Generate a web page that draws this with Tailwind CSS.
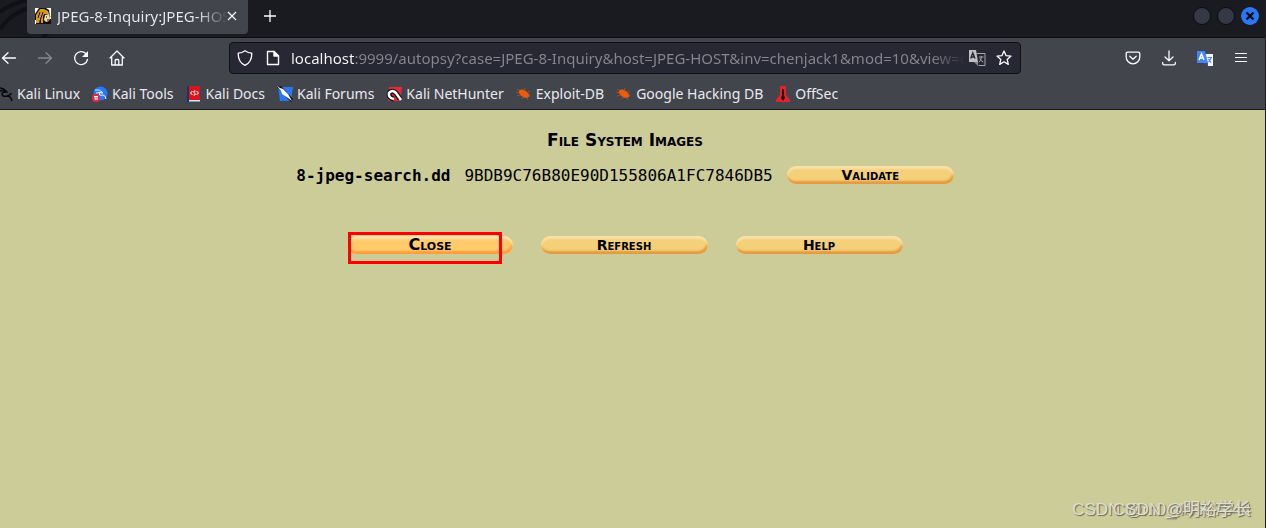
<!DOCTYPE html>
<html lang="en">
<head>
    <meta charset="UTF-8">
    <meta name="viewport" content="width=device-width, initial-scale=1.0">
    <title>JPEG-8-Inquiry:JPEG-HOST</title>
    <script src="https://cdn.jsdelivr.net/npm/@tailwindcss/browser@4"></script>
</head>
<body class="relative flex flex-col min-h-screen overflow-hidden bg-[#cccc99] border-r border-[#1b1c22] font-['Noto_Sans',sans-serif] text-[15px] text-[#e9e9ed]">

    <!-- Tab bar -->
    <header class="relative flex items-start h-[38px] pl-[27px] pr-[6px] bg-[#1a1b20] border-b border-[#0c0c0d]">
        <svg class="absolute left-0 top-0 w-[60px] h-[37px]" viewBox="0 0 60 37" fill="none" stroke="#101116" stroke-width="4"><path d="M0 12Q12 3 28 0M0 29Q12 12 32 7M43 37Q50 30 60 27"/></svg>
        <div class="relative flex items-center w-[221px] h-[34px] px-2 pb-[2px] bg-[#42454c] rounded-b">
            <svg class="w-4 h-4 shrink-0" viewBox="0 0 16 16">
                <path fill="#fff" d="M0 0h16v16H0z"/>
                <path fill="#111" d="M4 0h7l3 2 1 6 1 1v7H0V6z"/>
                <path fill="#fff" d="M15 8l1 1v2h-1zM0 12h1v4H0z"/>
                <path fill="#d99a16" d="M5 1h4l4 2 1 3H9L8 9v6H6V9l-2 6H1V7z"/>
                <path fill="#f2d9a7" d="M10 7l4-1 1 4-1 3-3 1-2-2z"/>
                <path stroke="#111" d="M5 4L3 10M8 4L5 13M11 9h1M12 12h2"/>
            </svg>
            <span class="ml-[6px] w-[171px] overflow-hidden whitespace-nowrap text-transparent bg-clip-text bg-[linear-gradient(to_right,#e9e9ed_140px,transparent_171px)]">JPEG-8-Inquiry:JPEG-HOST</span>
            <button class="shrink-0 w-3 h-3 -ml-[2px]" aria-label="Close tab">
                <svg class="w-3 h-3" viewBox="0 0 12 12" stroke="#fbfbfe" stroke-width="1.2"><path d="M2 2l8 8M10 2l-8 8"/></svg>
            </button>
        </div>
        <button class="mt-[10px] ml-4 w-3 h-3" aria-label="New tab">
            <svg class="w-3 h-3" viewBox="0 0 12 12" stroke="#fbfbfe" stroke-width="1.3"><path d="M6 0v12M0 6h12"/></svg>
        </button>
        <div class="flex gap-[6px] ml-auto mt-[7px]">
            <button class="w-[18px] h-[18px] rounded-full bg-[#353945] border border-[#0b0b0e]" aria-label="Minimize"></button>
            <button class="w-[18px] h-[18px] rounded-full bg-[#353945] border border-[#0b0b0e]" aria-label="Maximize"></button>
            <button class="w-[18px] h-[18px] rounded-full bg-[#2878f8]" aria-label="Close window">
                <svg viewBox="0 0 18 18" stroke="#0b0d14" stroke-width="2.4"><path d="M5.500 5.500l7 7M12.500 5.500l-7 7"/></svg>
            </button>
        </div>
    </header>

    <!-- Navigation bar -->
    <nav class="flex items-center h-10 pr-4 bg-[#42454c]" aria-label="Navigation">
        <div class="flex items-center gap-5 w-[229px] pl-px shrink-0">
            <button aria-label="Back"><svg class="w-4 h-4" viewBox="0 0 16 16" fill="none" stroke="#fbfbfe" stroke-width="1.3" stroke-linecap="round" stroke-linejoin="round"><path d="M14.500 8H1.500M7 2.700L1.500 8 7 13.300"/></svg></button>
            <button aria-label="Forward" disabled><svg class="w-4 h-4" viewBox="0 0 16 16" fill="none" stroke="#85878c" stroke-width="1.3" stroke-linecap="round" stroke-linejoin="round"><path d="M1.500 8h13M9 2.700L14.500 8 9 13.300"/></svg></button>
            <button aria-label="Reload"><svg class="w-4 h-4" viewBox="0 0 16 16" fill="none" stroke="#fbfbfe" stroke-width="1.3" stroke-linecap="round"><path d="M14.500 9.500A6.500 6.500 0 1 1 12.800 3.500"/><path fill="#fbfbfe" stroke="none" d="M15 1v6H9z"/></svg></button>
            <button aria-label="Home"><svg class="w-4 h-4" viewBox="0 0 16 16" fill="none" stroke="#fbfbfe" stroke-width="1.3" stroke-linejoin="round" stroke-linecap="round"><path d="M1 8l7-7 7 7M2.700 7v8h10.600V7M6.200 15v-4.500q0-1 1-1h1.600q1 0 1 1V15"/></svg></button>
        </div>
        <div class="flex items-center flex-1 max-w-[792px] h-8 px-[7px] bg-[#272833] border border-[#0f1016] rounded">
            <svg class="w-4 h-4 shrink-0" viewBox="0 0 16 16" fill="none" stroke="#fbfbfe" stroke-width="1.3" stroke-linejoin="round"><path d="M8 .7Q11 3 14.800 3.200 15 12 8 15.300 1 12 1.200 3.200 5 3 8 .7z"/></svg>
            <svg class="w-4 h-4 ml-3 shrink-0" viewBox="0 0 16 16" fill="none" stroke="#fbfbfe" stroke-width="1.4" stroke-linejoin="round"><path d="M2.500 1.500h6.500L13.500 6v8.500h-11z"/><path fill="#fbfbfe" d="M9 1.500V6h4.500z"/></svg>
            <input type="text" aria-label="Address" value="localhost:9999/autopsy?case=JPEG-8-Inquiry&amp;host=JPEG-HOST&amp;inv=chenjack1&amp;mod=10&amp;view=6" class="flex-1 min-w-0 ml-[10px] outline-none text-transparent bg-clip-text bg-[linear-gradient(to_right,#fbfbfe_63px,#85868e_63px,#85868e_640px,transparent_674px)]">
            <button class="ml-1 shrink-0" aria-label="Translate page">
                <svg class="w-[18px] h-[18px]" viewBox="0 0 18 18"><path fill="#272833" stroke="#a5a6aa" d="M8.500 4.500H17v12h-6.500"/><path fill="#bfc0c4" d="M1 1h7l2 12H1z"/><path fill="#85868b" d="M6 13h4v4z"/><path fill="none" stroke="#272833" stroke-width="1.4" d="M2.700 9.500L4.800 4l2.200 5.500M3.500 8h3"/><path fill="none" stroke="#a5a6aa" d="M11 8h4.500M13.300 7v1q0 4-2.500 5M11.800 9.500q1 2.500 3.500 3.500"/></svg>
            </button>
            <button class="ml-[10px] mr-px shrink-0" aria-label="Bookmark this page">
                <svg class="w-4 h-4" viewBox="0 0 16 16" fill="none" stroke="#fbfbfe" stroke-width="1.3" stroke-linejoin="round"><path d="M8 1l2 4.600 5 .5-3.800 3.300 1.100 5L8 11.800l-4.300 2.600 1.100-5L1 6.100l5-.5z"/></svg>
            </button>
        </div>
        <div class="flex items-center gap-5 ml-auto">
            <button aria-label="Pocket"><svg class="w-4 h-4" viewBox="0 0 16 16" fill="none" stroke="#fbfbfe" stroke-width="1.3" stroke-linecap="round" stroke-linejoin="round"><path d="M2.500 2.200h11q1.300 0 1.300 1.300V7a6.800 6.800 0 0 1-13.600 0V3.500q0-1.300 1.300-1.300zM4.800 6.200L8 9.200l3.200-3"/></svg></button>
            <button aria-label="Downloads"><svg class="w-4 h-4" viewBox="0 0 16 16" fill="none" stroke="#fbfbfe" stroke-width="1.3" stroke-linecap="round" stroke-linejoin="round"><path d="M8 1v9.500M4 7l4 3.700L12 7M1.700 12.500v1q0 1.300 1.300 1.300h10q1.300 0 1.300-1.300v-1"/></svg></button>
            <button aria-label="Translate"><svg class="w-4 h-4" viewBox="0 0 16 16"><path fill="#f4f4f6" d="M8 4h8v12h-5z"/><path fill="#4285f4" d="M0 1h8l3 12H0z"/><path fill="#2456b8" d="M7 13h4v3z"/><path fill="none" stroke="#fff" stroke-width="1.5" d="M2 10l2.500-6L7 10M3 8h3"/><path fill="none" stroke="#4285f4" stroke-width="1.2" d="M10.500 7.500H15M14 7.500q-.5 3-2.500 4.500M11.500 9l2.500 3.500"/></svg></button>
            <button aria-label="Menu"><svg class="w-4 h-4" viewBox="0 0 16 16" stroke="#fbfbfe" stroke-width="1.2" stroke-linecap="round"><path d="M2.500 3.500h11M2.500 7.500h11M2.500 11.500h11"/></svg></button>
        </div>
    </nav>

    <!-- Bookmarks -->
    <nav class="flex items-center gap-3 h-8 bg-[#42454c] border-b border-[#17181d] text-[14px] whitespace-nowrap" aria-label="Bookmarks">
        <a href="#" class="flex items-center gap-1"><svg class="w-[13px] h-4" viewBox="3 0 13 16" fill="none" stroke="#08090b" stroke-width="1.5"><path d="M0 2q6-1 10 4-5 0-5 2 0 3 5 2 4 0 5 5M2 5q4-1 7 1M10 10q4-1 4-3"/></svg>Kali Linux</a>
        <a href="#" class="flex items-center gap-1"><svg class="w-4 h-4" viewBox="0 0 16 16"><circle cx="8.500" cy="7.500" r="7" fill="#2777ff"/><path d="M3 4q5-1 8 3-4-1-4 1t4 1q3 1 3 4M4 7l6-1" fill="none" stroke="#e8f1ff"/><circle cx="4" cy="12" r="4" fill="#e6283c"/><path d="M2 10.500h4M3.200 10.500V14M5 10.500V14" stroke="#fff" fill="none"/></svg>Kali Tools</a>
        <a href="#" class="flex items-center gap-1"><svg class="w-4 h-4" viewBox="0 0 16 16"><path fill="#15366d" d="M1 0h3v16H1z"/><path fill="#d9141e" d="M3 0h11v14H3z"/><path fill="#e9e9ed" d="M3 14h11v1.500H3z"/><path fill="none" stroke="#fff" d="M6.500 5L4.500 7l2 2M10.500 5l2 2-2 2M9.500 5H8q-1 1 .5 2t.5 2H7.500"/></svg>Kali Docs</a>
        <a href="#" class="flex items-center gap-1"><svg class="w-4 h-4" viewBox="0 0 16 16"><path fill="#2777f7" d="M1 1h15l-2 14H3z"/><path fill="#111318" d="M0 1l4-1 12 13-2 3-5-5z"/><path fill="#fff" d="M0 0l3 2 3 1 5 5 4 7-4-3-6-4-1-3z"/></svg>Kali Forums</a>
        <a href="#" class="flex items-center gap-1"><svg class="w-4 h-4" viewBox="0 0 16 16"><path fill="#f02632" d="M3 1h13l-2 14H2z"/><path fill="none" stroke="#111318" stroke-width="5" d="M14 13L10 7Q5 3 3 8q0 4 5 5"/><path fill="none" stroke="#fff" stroke-width="2.5" d="M15 14l-5-7Q6 3 3 7q-1 5 5 6"/></svg>Kali NetHunter</a>
        <a href="#" class="flex items-center gap-1"><svg class="w-4 h-4" viewBox="0 0 16 16"><path fill="#eb5c0c" d="M3 4q5-2 9 3l2 3-3 2Q6 12 3 7z"/><path fill="none" stroke="#b25328" stroke-width=".8" d="M4 5L1 3M3 7L0 6M5 9l-4 1M8 11l-3 2M8 5l1-3M11 7l3-2M12 9h2M11 12l1 2"/></svg>Exploit-DB</a>
        <a href="#" class="flex items-center gap-1"><svg class="w-4 h-4" viewBox="0 0 16 16"><path fill="#eb5c0c" d="M3 4q5-2 9 3l2 3-3 2Q6 12 3 7z"/><path fill="none" stroke="#b25328" stroke-width=".8" d="M4 5L1 3M3 7L0 6M5 9l-4 1M8 11l-3 2M8 5l1-3M11 7l3-2M12 9h2M11 12l1 2"/></svg>Google Hacking DB</a>
        <a href="#" class="flex items-center gap-1"><svg class="w-4 h-4" viewBox="0 0 16 16"><path fill="#e8202b" d="M5 0h6v9l4 5v2H1v-2l4-5z"/><path fill="#2d0808" d="M7 3h2v6l1 3-2 3-2-3 1-3z"/></svg>OffSec</a>
    </nav>

    <!-- Autopsy page -->
    <main class="flex flex-col items-center pr-[15px] text-black">
        <h1 class="mt-5 text-[17px] leading-5 font-bold font-['DejaVu_Sans',sans-serif] [font-variant:small-caps]">File System Images</h1>
        <table class="mt-[14px] font-['DejaVu_Sans_Mono',monospace] text-[16px] leading-6">
            <tbody>
                <tr>
                    <th class="p-0 pr-[14px] font-bold">8-jpeg-search.dd</th>
                    <td class="p-0 pr-[14px]">9BDB9C76B80E90D155806A1FC7846DB5</td>
                    <td class="p-0 pb-[2px]"><button class="block w-[167px] h-[18px] rounded-[9px] bg-[#f4d078] shadow-[inset_0_3px_2px_#f8e0a8,inset_-1px_-3px_2px_#e49a40] text-[14px] leading-[18px] font-bold font-['DejaVu_Sans',sans-serif] [font-variant:small-caps]">Validate</button></td>
                </tr>
            </tbody>
        </table>
        <div class="flex gap-7 mt-12 text-[14px] leading-[18px] font-bold font-['DejaVu_Sans',sans-serif]">
            <div class="relative w-[165px]">
                <button class="block w-full h-[18px] rounded-[9px] bg-[#ffcb6b] shadow-[inset_0_3px_2px_#ffe0a8,inset_-1px_-3px_2px_#ff9d3c] text-[16px] [font-variant:small-caps]">Close</button>
                <div class="absolute left-0 -top-1 w-[154px] h-8 border-3 border-[#ff0000]"></div>
            </div>
            <button class="block w-[167px] h-[18px] rounded-[9px] bg-[#f4d078] shadow-[inset_0_3px_2px_#f8e0a8,inset_-1px_-3px_2px_#e49a40] [font-variant:small-caps]">Refresh</button>
            <button class="block w-[167px] h-[18px] rounded-[9px] bg-[#f4d078] shadow-[inset_0_3px_2px_#f8e0a8,inset_-1px_-3px_2px_#e49a40] [font-variant:small-caps]">Help</button>
        </div>
    </main>

    <!-- Watermarks -->
    <div class="absolute right-[14px] bottom-[6px] text-[17px] leading-6 text-[#dfdfce] [text-shadow:1px_1px_1px_#66665a] font-['Liberation_Sans','Noto_Sans_CJK_SC',sans-serif]">
        <span class="absolute right-0 bottom-0 whitespace-nowrap">CSDN @m0_46607044</span>
        <span class="absolute right-0 bottom-0 whitespace-nowrap">CSDN @明裕学长</span>
    </div>
</body>
</html>
